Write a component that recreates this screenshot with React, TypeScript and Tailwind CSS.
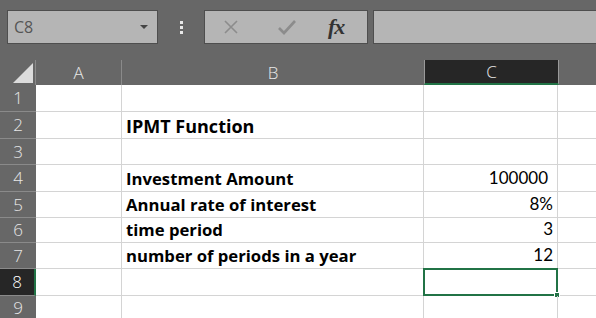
import React from 'react';

const rows = [
  { n: 1, h: 'h-[27px]', b: '', c: '' },
  { n: 2, h: 'h-[27px]', b: 'IPMT Function', c: '', big: true },
  { n: 3, h: 'h-[26px]', b: '', c: '' },
  { n: 4, h: 'h-[27px]', b: 'Investment Amount', c: '100000', pad: true },
  { n: 5, h: 'h-[26px]', b: 'Annual rate of interest', c: '8%' },
  { n: 6, h: 'h-[25px]', b: 'time period', c: '3' },
  { n: 7, h: 'h-[26px]', b: 'number of periods in a year', c: '12' },
  { n: 8, h: 'h-[27px]', b: '', c: '', sel: true },
  { n: 9, h: 'h-[24px]', b: '', c: '' },
];

const App: React.FC = () => {
  return (
    <div className="w-[596px] h-[318px] overflow-hidden bg-white font-['Lato',sans-serif]">
      {/* formula bar */}
      <div className="h-[60px] bg-[#676767] flex items-start pt-[10px]">
        <div className="ml-[7px] w-[151px] h-[34px] bg-[#b5b5b5] border border-[#4e4e4e] flex items-center justify-between pl-[6px] pr-[9px]">
          <span className="text-[#555] text-[16px] font-['Open_Sans',sans-serif]">C8</span>
          <span className="w-0 h-0 border-l-[4px] border-r-[4px] border-t-[4px] border-l-transparent border-r-transparent border-t-[#444]" />
        </div>
        <div className="w-[46px] h-[34px] flex flex-col items-center justify-center gap-[2px]">
          <span className="w-[3px] h-[3px] bg-[#e8e8e8]" />
          <span className="w-[3px] h-[3px] bg-[#e8e8e8]" />
          <span className="w-[3px] h-[3px] bg-[#e8e8e8]" />
        </div>
        <div className="w-[164px] h-[34px] bg-[#b5b5b5] border border-[#4e4e4e] flex items-center">
          <svg className="ml-[18px]" width="16" height="16" viewBox="0 0 16 16">
            <path d="M2 2 L14 14 M14 2 L2 14" stroke="#8c8c8c" strokeWidth="1.6" fill="none" />
          </svg>
          <svg className="ml-[38px]" width="20" height="16" viewBox="0 0 20 16">
            <path d="M2 9 L7 14 L18 2" stroke="#8c8c8c" strokeWidth="2.6" fill="none" />
          </svg>
          <span className="ml-[31px] text-[#333] text-[22px] italic font-bold font-['Liberation_Serif',serif] tracking-[-1px] leading-none">fx</span>
        </div>
        <div className="ml-[5px] flex-1 h-[34px] bg-[#b5b5b5] border border-[#4e4e4e] border-r-0" />
      </div>

      {/* column headers */}
      <div className="flex h-[25px] bg-[#676767] text-[#e8e8e8] text-[17px] font-['Open_Sans',sans-serif] font-light">
        <div className="w-[36px] border-r border-[#8a8a8a] relative">
          <svg className="absolute right-[2px] bottom-[2px]" width="20" height="20" viewBox="0 0 20 20">
            <path d="M20 0 L20 20 L0 20 Z" fill="#dcdcdc" />
          </svg>
        </div>
        <div className="w-[86px] border-r border-[#8a8a8a] flex items-center justify-center leading-none">A</div>
        <div className="w-[302px] flex items-center justify-center leading-none">B</div>
        <div className="w-[135px] bg-[#262626] border-x border-[#9a9a9a] border-b-2 border-b-[#217346] flex items-center justify-center leading-none">C</div>
        <div className="flex-1" />
      </div>

      {/* grid */}
      {rows.map((r) => (
        <div key={r.n} className={`flex ${r.h}`}>
          <div
            className={`w-[36px] flex items-center justify-center text-[17px] font-['Open_Sans',sans-serif] font-light border-b border-[#8a8a8a] ${
              r.sel ? 'bg-[#262626] text-white border-r-2 border-r-[#217346]' : 'bg-[#676767] text-[#e8e8e8]'
            }`}
          >
            {r.n}
          </div>
          <div className="w-[86px] border-r border-b border-[#d4d4d4]" />
          <div className="w-[302px] border-r border-b border-[#d4d4d4] flex items-end pl-[4px] pb-[1px]">
            <span className={`font-bold text-black whitespace-nowrap font-['Open_Sans',sans-serif] ${r.big ? 'text-[18px]' : 'text-[16.7px]'} leading-[22px]`}>{r.b}</span>
          </div>
          <div className="w-[134px] border-r border-b border-[#d4d4d4] flex items-end justify-end pb-[2px] relative">
            <span className={`text-[17px] text-black leading-[22px] ${r.pad ? 'pr-[9px]' : 'pr-[4px]'}`}>{r.c}</span>
            {r.sel && (
              <>
                <div className="absolute left-[-1px] top-[-1px] right-[-1px] bottom-[-1px] border-2 border-[#217346]" />
                <div className="absolute right-[-3px] bottom-[-3px] w-[6px] h-[6px] bg-[#217346] border border-white" />
              </>
            )}
          </div>
          <div className="flex-1 border-b border-[#d4d4d4]" />
        </div>
      ))}
    </div>
  );
};

export default App;
